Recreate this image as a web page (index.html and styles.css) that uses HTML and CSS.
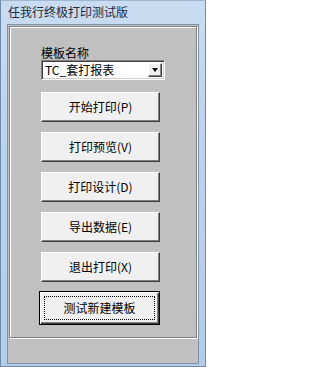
FILE: index.html
```html
<!DOCTYPE html>
<html lang="zh">
<head>
<meta charset="utf-8">
<title>任我行终极打印测试版</title>
<link rel="stylesheet" href="styles.css">
</head>
<body>
<div class="window">
  <div class="titlebar">任我行终极打印测试版</div>
  <div class="client">
    <div class="panel">
      <div class="label">模板名称</div>
      <div class="combo">
        <span class="combo-text">TC_套打报表</span>
        <span class="combo-btn"><span class="tri"></span></span>
      </div>
      <div class="buttons">
        <div class="btn">开始打印(P)</div>
        <div class="btn">打印预览(V)</div>
        <div class="btn">打印设计(D)</div>
        <div class="btn">导出数据(E)</div>
        <div class="btn">退出打印(X)</div>
        <div class="btn btn-default"><span class="focus">测试新建模板</span></div>
      </div>
    </div>
  </div>
</div>
</body>
</html>
```

FILE: styles.css
```css
html, body {
  margin: 0;
  padding: 0;
}
body {
  width: 206px;
  height: 367px;
  overflow: hidden;
  font-family: "Noto Sans CJK SC", "DejaVu Sans", sans-serif;
  font-size: 12px;
  color: #000;
}
.window {
  width: 206px;
  height: 367px;
  box-sizing: border-box;
  background: linear-gradient(180deg, #c9dcf1 0%, #bcd3ec 40%, #b3cce8 100%);
  padding: 0 6px 2px 6px;
  display: flex;
  flex-direction: column;
  border: 1px solid #6f8aa8;
  border-top-color: #9fb6cf;
}
.titlebar {
  height: 23px;
  line-height: 21px;
  padding-left: 1px;
  font-size: 12px;
  color: #1e2a3a;
  flex: none;
}
.client {
  flex: 1;
  background: #c0c0c0;
  border: 1px solid #7f91a8;
  padding: 1px 1px 0 1px;
  display: flex;
  flex-direction: column;
}
.panel {
  height: 312px;
  box-sizing: border-box;
  border: 1px solid #808080;
  box-shadow: inset 1px 1px 0 #fff, 1px 1px 0 #fff;
  padding: 19px 0 0 31px;
}
.label {
  height: 14px;
  line-height: 14px;
  font-size: 12px;
}
.combo {
  width: 124px;
  height: 20px;
  box-sizing: border-box;
  background: #fff;
  border-style: solid;
  border-width: 1px;
  border-color: #808080 #fff #fff #808080;
  box-shadow: inset 1px 1px 0 #404040, inset -1px -1px 0 #d4d0c8;
  display: flex;
  align-items: center;
  padding: 0 2px 0 3px;
}
.combo-text {
  flex: 1;
  font-size: 12px;
  line-height: 16px;
}
.combo-btn {
  width: 14px;
  height: 14px;
  box-sizing: border-box;
  background: #f0f0f0;
  border-style: solid;
  border-width: 1px;
  border-color: #fff #404040 #404040 #fff;
  box-shadow: inset -1px -1px 0 #808080;
  display: flex;
  align-items: center;
  justify-content: center;
}
.tri {
  width: 0;
  height: 0;
  border-left: 3.5px solid transparent;
  border-right: 3.5px solid transparent;
  border-top: 4px solid #000;
  margin-right: 1px;
}
.buttons {
  margin-top: 12px;
  display: flex;
  flex-direction: column;
  gap: 10px;
  width: 119px;
}
.btn {
  height: 30px;
  box-sizing: border-box;
  background: #f0f0f0;
  border-style: solid;
  border-width: 1px;
  border-color: #fff #404040 #404040 #fff;
  box-shadow: inset -1px -1px 0 #808080;
  display: flex;
  align-items: center;
  justify-content: center;
  font-size: 12px;
  line-height: 14px;
}
.btn-default {
  margin-top: -1px;
  margin-left: -2px;
  height: 34px;
  width: 121px;
  border: 1px solid #000;
  box-shadow: inset 1px 1px 0 #fff, inset -1px -1px 0 #404040, inset -2px -2px 0 #808080;
  padding: 4px;
}
.focus {
  flex: 1;
  align-self: stretch;
  display: flex;
  align-items: center;
  justify-content: center;
  border: 1px dotted #000;
}
```
